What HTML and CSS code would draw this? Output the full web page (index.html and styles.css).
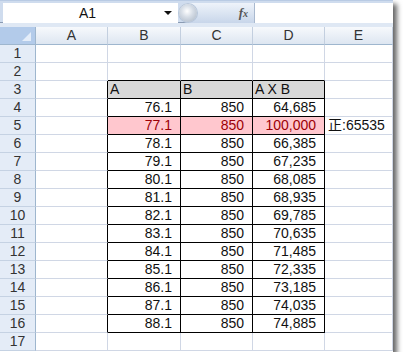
FILE: index.html
```html
<!DOCTYPE html>
<html lang="ja">
<head>
    <meta charset="UTF-8">
    <title>Book1 - Sheet1</title>
    <link rel="stylesheet" href="styles.css">
</head>
<body>

<div class="window">
    <!-- Barra de fórmulas -->
    <div class="formula-bar">
        <div class="name-box">
            <span class="name">A1</span>
            <span class="arrow"></span>
        </div>
        <div class="fx-btn">
            <span class="knob"></span>
            <span class="fx">f<sub>x</sub></span>
        </div>
        <div class="formula-input"></div>
    </div>
    <div class="band"></div>

    <!-- Hoja -->
    <div class="sheet">
        <div class="corner"><span class="tri"></span></div>
        <div class="ch">A</div><div class="ch">B</div><div class="ch">C</div><div class="ch">D</div><div class="ch">E</div>

        <div class="rh">1</div><div class="c"></div><div class="c"></div><div class="c"></div><div class="c"></div><div class="c"></div>
        <div class="rh">2</div><div class="c"></div><div class="c tt"></div><div class="c tt"></div><div class="c tt"></div><div class="c"></div>

        <div class="rh">3</div><div class="c tl"></div><div class="c t th">A</div><div class="c t th">B</div><div class="c t th">A X B</div><div class="c"></div>
        <div class="rh">4</div><div class="c tl"></div><div class="c t num">76.1</div><div class="c t num">850</div><div class="c t num">64,685</div><div class="c"></div>
        <div class="rh">5</div><div class="c tl"></div><div class="c t num hi">77.1</div><div class="c t num hi">850</div><div class="c t num hi">100,000</div><div class="c note">正:65535</div>
        <div class="rh">6</div><div class="c tl"></div><div class="c t num">78.1</div><div class="c t num">850</div><div class="c t num">66,385</div><div class="c"></div>
        <div class="rh">7</div><div class="c tl"></div><div class="c t num">79.1</div><div class="c t num">850</div><div class="c t num">67,235</div><div class="c"></div>
        <div class="rh">8</div><div class="c tl"></div><div class="c t num">80.1</div><div class="c t num">850</div><div class="c t num">68,085</div><div class="c"></div>
        <div class="rh">9</div><div class="c tl"></div><div class="c t num">81.1</div><div class="c t num">850</div><div class="c t num">68,935</div><div class="c"></div>
        <div class="rh">10</div><div class="c tl"></div><div class="c t num">82.1</div><div class="c t num">850</div><div class="c t num">69,785</div><div class="c"></div>
        <div class="rh">11</div><div class="c tl"></div><div class="c t num">83.1</div><div class="c t num">850</div><div class="c t num">70,635</div><div class="c"></div>
        <div class="rh">12</div><div class="c tl"></div><div class="c t num">84.1</div><div class="c t num">850</div><div class="c t num">71,485</div><div class="c"></div>
        <div class="rh">13</div><div class="c tl"></div><div class="c t num">85.1</div><div class="c t num">850</div><div class="c t num">72,335</div><div class="c"></div>
        <div class="rh">14</div><div class="c tl"></div><div class="c t num">86.1</div><div class="c t num">850</div><div class="c t num">73,185</div><div class="c"></div>
        <div class="rh">15</div><div class="c tl"></div><div class="c t num">87.1</div><div class="c t num">850</div><div class="c t num">74,035</div><div class="c"></div>
        <div class="rh">16</div><div class="c tl"></div><div class="c t num">88.1</div><div class="c t num">850</div><div class="c t num">74,885</div><div class="c"></div>

        <div class="rh">17</div><div class="c"></div><div class="c"></div><div class="c"></div><div class="c"></div><div class="c"></div>
    </div>
</div>

</body>
</html>
```

FILE: styles.css
```css
body {
    margin: 0;
    padding: 0;
    background-color: white;
    font-family: "Liberation Sans", "Noto Sans CJK JP", sans-serif;
}

.window {
    width: 393px;
    height: 352px;
    overflow: hidden;
    background-color: white;
    box-shadow: 4px 4px 5px rgba(0, 0, 0, 0.6);
}

/* Barra de fórmulas */
.formula-bar {
    display: flex;
    align-items: center;
    height: 23px;
    box-sizing: border-box;
    padding-top: 2px;
    background-color: #cfdcee;
    border-top: 1px solid #b9cbe4;
    border-bottom: 1px solid #8a9bb3;
}

.name-box {
    display: flex;
    align-items: center;
    width: 175px;
    height: 20px;
    margin-left: 3px;
    background-color: white;
}

.name-box .name {
    flex: 1;
    text-align: center;
    font-size: 14px;
    color: #111;
    padding-left: 8px;
}

.name-box .arrow {
    width: 0;
    height: 0;
    margin-right: 6px;
    border-left: 4px solid transparent;
    border-right: 4px solid transparent;
    border-top: 4px solid #111;
}

.fx-btn {
    position: relative;
    display: flex;
    align-items: center;
    justify-content: flex-end;
    width: 77px;
    height: 20px;
    box-sizing: border-box;
    padding-right: 6px;
    background: linear-gradient(#eef3fa, #c8d6ea);
    border-radius: 10px 0 0 10px;
    border-right: 1px solid #a9b9cf;
}

.fx-btn .knob {
    position: absolute;
    left: 1px;
    top: 1px;
    width: 18px;
    height: 18px;
    border-radius: 50%;
    background: radial-gradient(circle at 45% 40%, #ffffff 0, #d6dde6 40%, #a7b3c2 100%);
    box-shadow: 0 0 0 1px #b7c6da;
}

.fx {
    font-family: "Liberation Serif", serif;
    font-style: italic;
    font-weight: bold;
    font-size: 13px;
    color: #555;
}

.fx sub {
    font-size: 10px;
    vertical-align: 0;
}

.formula-input {
    flex: 1;
    height: 20px;
    background-color: white;
}

.band {
    height: 4px;
    background-color: #dfe8f4;
}

/* Hoja */
.sheet {
    display: grid;
    grid-template-columns: 36px 72px 73px 72px 72px 1fr;
    grid-auto-rows: 18px;
    font-size: 14px;
    line-height: 17px;
    color: #111;
}

.sheet > div {
    box-sizing: border-box;
    border-right: 1px solid #d0d7e5;
    border-bottom: 1px solid #d0d7e5;
    white-space: nowrap;
    overflow: hidden;
}

.sheet > .corner {
    position: relative;
    background-color: #b3cbea;
    border-right: 1px solid #9eb6ce;
    border-bottom: 1px solid #9eb6ce;
}

.corner .tri {
    position: absolute;
    right: 4px;
    bottom: 3px;
    width: 0;
    height: 0;
    border-left: 9px solid transparent;
    border-bottom: 9px solid #e4edf9;
}

.sheet > .ch {
    text-align: center;
    color: #333;
    background: linear-gradient(#f7f9fc, #dde6f1);
    border-right: 1px solid #c3cfdf;
    border-bottom: 1px solid #9eb6ce;
}

.sheet > .rh {
    text-align: center;
    color: #333;
    background-color: #e4ecf7;
    border-right: 1px solid #9eb6ce;
    border-bottom: 1px solid #c5d2e3;
}

.sheet > .tl {
    border-right-color: #000;
}

.sheet > .tt {
    border-bottom-color: #000;
}

.sheet > .t {
    border-right-color: #000;
    border-bottom-color: #000;
}

.th {
    background-color: #d8d8d8;
    padding-left: 2px;
}

.num {
    text-align: right;
    padding-right: 8px;
}

.hi {
    background-color: #ffc7ce;
    color: #9c0006;
}

.note {
    padding-left: 3px;
}
```
